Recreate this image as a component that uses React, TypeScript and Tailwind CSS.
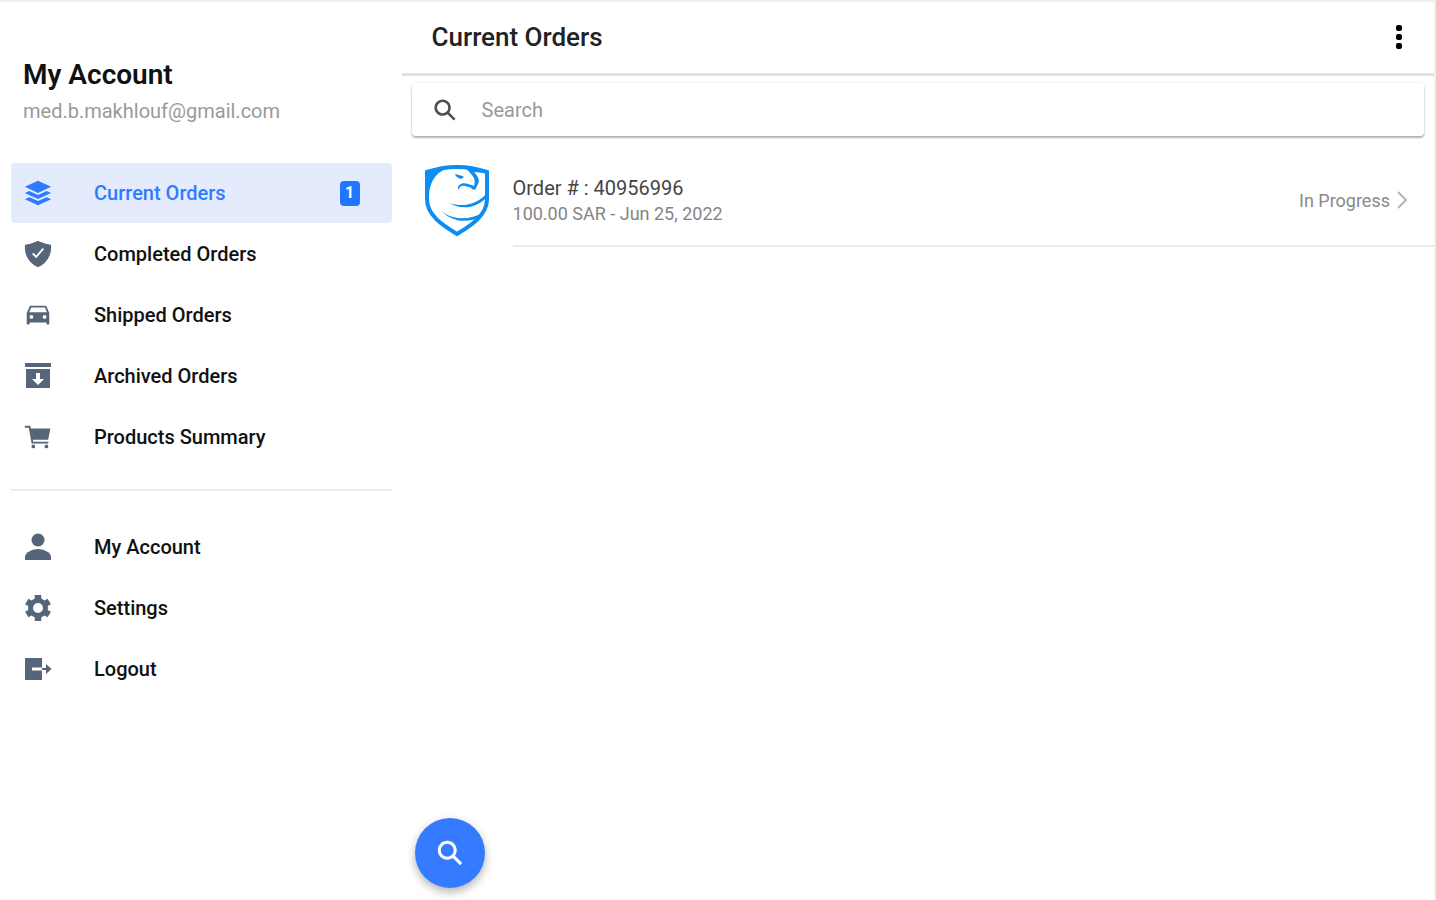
import {
  IoCarSharp,
  IoCartSharp,
  IoLayersSharp,
  IoSearchSharp,
  IoShieldCheckmarkSharp,
} from "react-icons/io5";
import type { ComponentType } from "react";

type IconProps = { className?: string };

type MenuItem = {
  label: string;
  icon: ComponentType<IconProps>;
  badge?: number;
  active?: boolean;
};

function ArchiveIcon({ className }: IconProps) {
  return (
    <svg viewBox="0 0 30 30" className={className} fill="currentColor" aria-hidden="true">
      <path d="M2 2h26v4H2z" />
      <path d="M3 8h24v19H3zM13 12v6h-4l6 6 6-6h-4v-6z" fillRule="evenodd" />
    </svg>
  );
}

function PersonIcon({ className }: IconProps) {
  return (
    <svg viewBox="0 0 30 30" className={className} fill="currentColor" aria-hidden="true">
      <circle cx="15" cy="8" r="6.5" />
      <path d="M2 28v-3c0-5 8-8 13-8s13 3 13 8v3z" />
    </svg>
  );
}

function GearIcon({ className }: IconProps) {
  return (
    <svg
      viewBox="0 0 30 30"
      className={className}
      fill="none"
      stroke="currentColor"
      aria-hidden="true"
    >
      <circle cx="15" cy="15" r="7.5" strokeWidth="5" />
      <g strokeWidth="6.5">
        <path d="M15 7V2" />
        <path d="M15 7V2" transform="rotate(60 15 15)" />
        <path d="M15 7V2" transform="rotate(120 15 15)" />
        <path d="M15 7V2" transform="rotate(180 15 15)" />
        <path d="M15 7V2" transform="rotate(240 15 15)" />
        <path d="M15 7V2" transform="rotate(300 15 15)" />
      </g>
    </svg>
  );
}

function LogoutIcon({ className }: IconProps) {
  return (
    <svg viewBox="0 0 30 30" className={className} fill="currentColor" aria-hidden="true">
      <path d="M2 4h17v9.5H9v3h10V26H2z" />
      <path d="M19 14h4v-4l5.5 5-5.5 5v-4h-4z" />
    </svg>
  );
}

const orderLinks: MenuItem[] = [
  { label: "Current Orders", icon: IoLayersSharp, badge: 1, active: true },
  { label: "Completed Orders", icon: IoShieldCheckmarkSharp },
  { label: "Shipped Orders", icon: IoCarSharp },
  { label: "Archived Orders", icon: ArchiveIcon },
  { label: "Products Summary", icon: IoCartSharp },
];

const accountLinks: MenuItem[] = [
  { label: "My Account", icon: PersonIcon },
  { label: "Settings", icon: GearIcon },
  { label: "Logout", icon: LogoutIcon },
];

function MenuList({ items }: { items: MenuItem[] }) {
  return (
    <ul className="flex flex-col gap-px">
      {items.map(({ label, icon: Icon, badge, active }) => (
        <li key={label}>
          <a
            href="#"
            className={
              active
                ? "flex h-[60px] items-center rounded bg-[#e4ebfd] pl-3 pr-8 text-[#2f7bff]"
                : "flex h-[60px] items-center rounded pl-3 pr-8 text-[#111111]"
            }
          >
            <Icon
              className={
                active
                  ? "mr-[41px] size-[30px] shrink-0"
                  : "mr-[41px] size-[30px] shrink-0 text-[#55657a]"
              }
            />
            <span className="grow text-[20px] font-medium">{label}</span>
            {badge && (
              <span className="flex h-[25px] w-5 items-center justify-center rounded bg-[#2176ff] text-base font-bold text-white">
                {badge}
              </span>
            )}
          </a>
        </li>
      ))}
    </ul>
  );
}

function ShieldLogo() {
  return (
    <svg viewBox="0 0 66 72" className="h-[72px] w-[66px] shrink-0" aria-hidden="true">
      <path
        d="M3 7 Q33 -3 63 7 V34 C63 50 48 60 33 69 C18 60 3 50 3 34 Z"
        fill="none"
        stroke="#0c8df2"
        strokeWidth="4"
      />
      <path d="M2 6 Q14 2 28 2 C14 5 6 14 5 30 L3 30 Z" fill="#0c8df2" />
      <path d="M40 2 L62 8 C57 8 53 7 50 7 C54 11 56 15 54 19 L51 25 L49 23 C52 18 51 13 47 9 C45 6 42 4 40 2 Z" fill="#0c8df2" />
      <path d="M31 9 C34 10 37 10 40 12 L37 14 C34 13 32 12 31 9 Z" fill="#0c8df2" />
      <path d="M34 25 C33 19 39 17 44 19 C47 20 50 20 51 23 L49 25 C46 21 43 22 41 21 C37 20 36 22 34 25 Z" fill="#0c8df2" />
      <path d="M25 38 C40 43 54 39 64 27 L64 31 C53 44 37 45 25 38 Z" fill="#0c8df2" />
      <path d="M18 46 C28 55 44 56 61 47 L56 52 C42 59 26 56 18 46 Z" fill="#0c8df2" />
    </svg>
  );
}

export default function App() {
  return (
    <div className="flex min-h-screen border-t-2 border-r-2 border-[#f0f0f0] bg-white font-['Roboto',sans-serif]">
      <aside className="w-[28%] shrink-0 pl-[11px] pr-[10px] pt-[57px]">
        <header className="pl-3">
          <h1 className="text-[28px] leading-8 font-semibold text-[#111111]">My Account</h1>
          <p className="mt-1 text-[20px] leading-8 text-[#9a9a9a]">med.b.makhlouf@gmail.com</p>
        </header>
        <nav className="mt-9">
          <MenuList items={orderLinks} />
          <hr className="mt-[22px] mb-[26px] border-t-2 border-[#ececec]" />
          <MenuList items={accountLinks} />
        </nav>
      </aside>

      <main className="relative flex grow flex-col">
        <header className="flex h-[74px] items-center justify-between border-b-[3px] border-[#e2e2e2] pl-[30px] pr-5">
          <h2 className="text-[26px] font-medium text-[#222222]">Current Orders</h2>
          <button type="button" aria-label="More options" className="text-black">
            <svg viewBox="0 0 30 30" className="size-[30px]" fill="currentColor" aria-hidden="true">
              <rect x="12" y="2" width="6" height="6" rx="2" />
              <rect x="12" y="11" width="6" height="6" rx="2" />
              <rect x="12" y="20" width="6" height="6" rx="2" />
            </svg>
          </button>
        </header>

        <label className="mx-[10px] mt-[7px] flex h-[53px] items-center rounded-sm pl-5 text-[#4f4f4f] shadow-[0_2px_2px_rgba(0,0,0,0.28),0_0_3px_rgba(0,0,0,0.12)]">
          <IoSearchSharp className="mr-6 size-[26px] shrink-0" />
          <input
            type="search"
            aria-label="Search"
            placeholder="Search"
            className="h-full grow bg-transparent text-[20px] outline-none placeholder:text-[#999999]"
          />
        </label>

        <ul className="mt-[19px]">
          <li>
            <a href="#" className="flex items-center pl-[22px]">
              <ShieldLogo />
              <span className="ml-[23px] flex h-[92px] grow items-center justify-between border-b-2 border-[#ececec] pr-6">
                <span>
                  <span className="block text-[20px] leading-7 text-[#444444]">
                    Order # : 40956996
                  </span>
                  <span className="block text-[18px] leading-6 text-[#858585]">
                    100.00 SAR - Jun 25, 2022
                  </span>
                </span>
                <span className="flex items-center gap-1 text-[18px] text-[#8a8a8a]">
                  In Progress
                  <svg viewBox="0 0 16 20" className="h-5 w-4" fill="none" stroke="#b5b5b5" strokeWidth="2">
                    <path d="M4 2l8 8-8 8" />
                  </svg>
                </span>
              </span>
            </a>
          </li>
        </ul>

        <button
          type="button"
          aria-label="Search orders"
          className="absolute bottom-3 left-[13px] flex size-[70px] items-center justify-center rounded-full bg-[#347bff] text-white shadow-[0_4px_10px_rgba(0,0,0,0.3)]"
        >
          <IoSearchSharp className="size-[30px]" />
        </button>
      </main>
    </div>
  );
}
